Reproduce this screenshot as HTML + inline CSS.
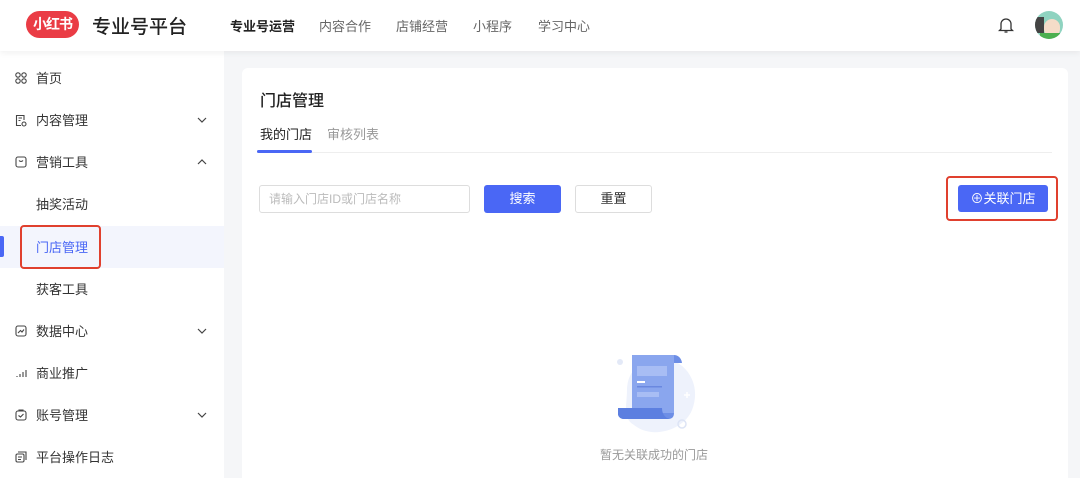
<!DOCTYPE html>
<html><head><meta charset="utf-8"><style>
*{margin:0;padding:0;box-sizing:border-box}
html,body{width:1080px;height:478px;overflow:hidden}
body{background:#f5f6f8;font-family:"Liberation Sans","Noto Sans CJK SC",sans-serif;position:relative;color:#333}
.hdr{position:absolute;left:0;top:0;width:1080px;height:51px;background:#fff;box-shadow:0 2px 6px rgba(0,0,0,.06);z-index:2}
.logo{position:absolute;left:26px;top:11px;width:53px;height:27px;border-radius:14px;background:#ea3c45;color:#fff;font-weight:bold;font-size:14px;text-align:center;line-height:27px;letter-spacing:-1px}
.title{position:absolute;left:92px;top:12px;font-size:19px;color:#222;font-weight:500}
.nav{position:absolute;top:16px;font-size:13px;color:#666}
.side{position:absolute;left:0;top:51px;width:224px;height:427px;background:#fff}
.it{position:absolute;left:0;width:224px;height:42px;font-size:13px;color:#333;line-height:42px}
.it span{position:absolute;left:36px;top:1px}
.it svg{position:absolute;left:15px;top:15px}
.it svg.chev{left:196px;top:15px}
.card{position:absolute;left:242px;top:68px;width:826px;height:420px;background:#fff;border-radius:6px}
.btn{position:absolute;height:28px;border-radius:3px;font-size:13px;text-align:center;line-height:28px}
</style></head><body>
<div class="hdr">
<div class="logo">小红书</div>
<div class="title">专业号平台</div>
<div class="nav" style="left:230px;color:#222;font-weight:bold">专业号运营</div>
<div class="nav" style="left:319px">内容合作</div>
<div class="nav" style="left:396px">店铺经营</div>
<div class="nav" style="left:473px">小程序</div>
<div class="nav" style="left:538px">学习中心</div>
<svg style="position:absolute;left:998px;top:16px" width="16" height="18" viewBox="0 0 16 18" fill="none" stroke="#333" stroke-width="1.3"><path d="M3 13V8a5 5 0 0110 0v5l1.5 1.5h-13z"/><path d="M6.5 16h3"/></svg>
<div style="position:absolute;left:1035px;top:11px;width:28px;height:28px;border-radius:50%;background:#8fd3c0;overflow:hidden"><div style="position:absolute;left:9px;top:8px;width:16px;height:18px;border-radius:8px;background:#f5dcc8"></div><div style="position:absolute;left:0;top:6px;width:9px;height:16px;background:#444"></div><div style="position:absolute;left:5px;top:22px;width:20px;height:8px;background:#4caf50"></div></div>
</div>
<div class="side">
<div class="it" style="top:6px"><svg width="12" height="12" viewBox="0 0 12 12" fill="none" stroke="#444" stroke-width="1.1"><circle cx="3" cy="3" r="2.2"/><circle cx="9" cy="3" r="2.2"/><circle cx="3" cy="9" r="2.2"/><circle cx="9" cy="9" r="2.2"/></svg><span>首页</span></div>
<div class="it" style="top:48px"><svg width="12" height="13" viewBox="0 0 12 13" fill="none" stroke="#444" stroke-width="1.1"><path d="M9 6V1.5H1.5v10H6"/><path d="M3.5 4h3.5M3.5 6.5h2"/><circle cx="9" cy="10" r="2"/></svg><span>内容管理</span><svg class="chev" width="12" height="12" viewBox="0 0 12 12" fill="none" stroke="#444" stroke-width="1.2"><path d="M2 4l4 4 4-4"/></svg></div>
<div class="it" style="top:90px"><svg width="12" height="12" viewBox="0 0 12 12" fill="none" stroke="#444" stroke-width="1.1"><rect x="1" y="1" width="10" height="10" rx="2"/><path d="M4 4.5q2 2 4 0"/></svg><span>营销工具</span><svg class="chev" width="12" height="12" viewBox="0 0 12 12" fill="none" stroke="#444" stroke-width="1.2"><path d="M2 8l4-4 4 4"/></svg></div>
<div class="it" style="top:132px"><span>抽奖活动</span></div>
<div class="it" style="top:175px;background:#f3f5fd;color:#4a67f5"><div style="position:absolute;left:0;top:10px;width:4px;height:21px;background:#4a67f5;border-radius:0 2px 2px 0"></div><span>门店管理</span><div style="position:absolute;left:20px;top:-1px;width:81px;height:44px;border:2px solid #e0402e;border-radius:4px"></div></div>
<div class="it" style="top:217px"><span>获客工具</span></div>
<div class="it" style="top:259px"><svg width="12" height="12" viewBox="0 0 12 12" fill="none" stroke="#444" stroke-width="1.1"><rect x="1" y="1" width="10" height="10" rx="2"/><path d="M3 8l2.5-2.5 1.5 1.5L9 4.5"/></svg><span>数据中心</span><svg class="chev" width="12" height="12" viewBox="0 0 12 12" fill="none" stroke="#444" stroke-width="1.2"><path d="M2 4l4 4 4-4"/></svg></div>
<div class="it" style="top:301px"><svg width="12" height="12" viewBox="0 0 12 12" fill="none" stroke="#444" stroke-width="1.1"><path d="M2 10V9M5 10V7M8 10V5M11 10V3"/></svg><span>商业推广</span></div>
<div class="it" style="top:343px"><svg width="12" height="12" viewBox="0 0 12 12" fill="none" stroke="#444" stroke-width="1.1"><rect x="1" y="2" width="10" height="9" rx="2"/><path d="M4 2V1h4v1M3.5 6.5l2 1.5 3-3"/></svg><span>账号管理</span><svg class="chev" width="12" height="12" viewBox="0 0 12 12" fill="none" stroke="#444" stroke-width="1.2"><path d="M2 4l4 4 4-4"/></svg></div>
<div class="it" style="top:385px"><svg width="12" height="12" viewBox="0 0 12 12" fill="none" stroke="#444" stroke-width="1.1"><rect x="1" y="3" width="8" height="8" rx="1.5"/><path d="M3 1h8v8M3 6h4M3 8.5h3"/></svg><span>平台操作日志</span></div>
</div>
<div class="card">
<div style="position:absolute;left:18px;top:19px;font-size:16px;color:#222;font-weight:500">门店管理</div>
<div style="position:absolute;left:18px;top:56px;font-size:13px;color:#222">我的门店</div>
<div style="position:absolute;left:85px;top:56px;font-size:13px;color:#999">审核列表</div>
<div style="position:absolute;left:15px;top:84px;width:795px;height:1px;background:#eee"></div>
<div style="position:absolute;left:15px;top:82px;width:55px;height:3px;background:#4a67f5;border-radius:2px"></div>
<div style="position:absolute;left:17px;top:117px;width:211px;height:28px;border:1px solid #ddd;border-radius:3px;font-size:12px;color:#bbb;line-height:26px;padding-left:9px">请输入门店ID或门店名称</div>
<div class="btn" style="left:242px;top:117px;width:77px;background:#4a67f5;color:#fff">搜索</div>
<div class="btn" style="left:333px;top:117px;width:77px;border:1px solid #ddd;color:#333;line-height:26px">重置</div>
<div style="position:absolute;left:704px;top:108px;width:112px;height:45px;border:2px solid #e0402e;border-radius:4px"></div>
<div class="btn" style="left:716px;top:117px;width:90px;height:27px;background:#4a67f5;color:#fff;line-height:27px">⊕关联门店</div>
<svg style="position:absolute;left:370px;top:282px" width="90" height="88" viewBox="0 0 90 88"><circle cx="8" cy="12" r="3" fill="#e3e9f7"/><path d="M15 40c0-25 25-38 45-30s28 30 20 50-40 30-58 15C10 68 15 55 15 40z" fill="#eef2fc"/><circle cx="70" cy="74" r="4" fill="none" stroke="#dde4f5" stroke-width="1.5"/><path d="M72 45h6M75 42v6" stroke="#fff" stroke-width="1.5"/><path d="M20 5h42c6 0 8 6 8 8h-8v50c0 4-2 6-6 6H12c-4 0-6-3-6-5v-4h14z" fill="#6d8ee6"/><path d="M20 5h42v58H20z" fill="#8aa6ee"/><rect x="25" y="16" width="30" height="10" fill="#a8bdf4"/><rect x="25" y="31" width="8" height="2" fill="#fff"/><rect x="25" y="36" width="25" height="1.5" fill="#6a88e0"/><rect x="25" y="42" width="22" height="5" fill="#a8bdf4"/><path d="M6 58h44c0 6 3 10 8 11H12c-4 0-6-3-6-5z" fill="#5c7fe0"/></svg>
<div style="position:absolute;left:358px;top:378px;font-size:12px;color:#999">暂无关联成功的门店</div>
</div>
</body></html>
